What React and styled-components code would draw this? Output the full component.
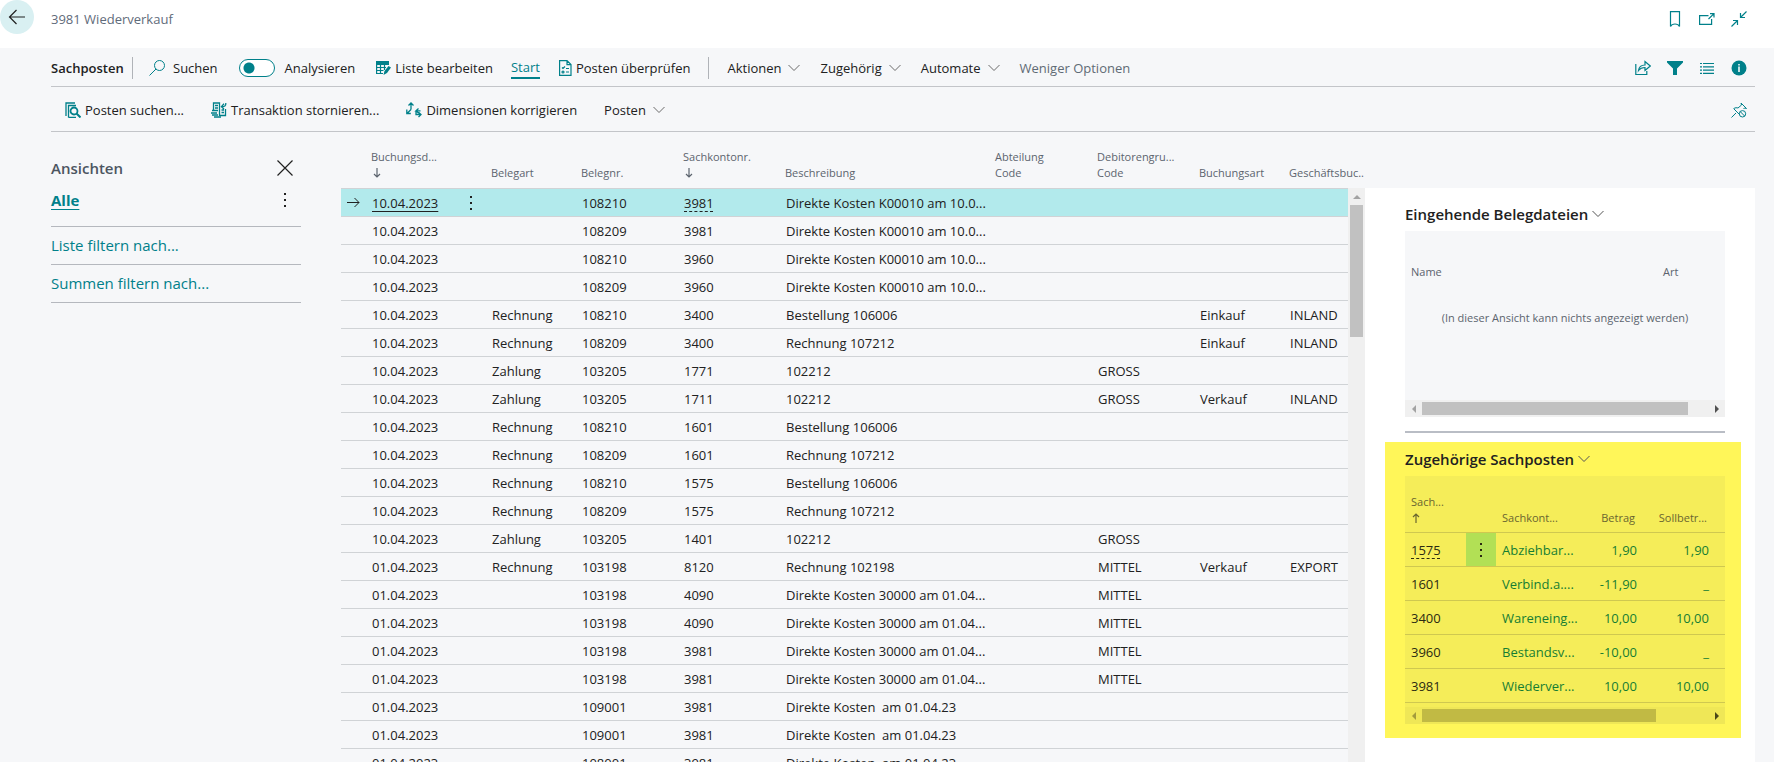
import React from "react";
import styled, { createGlobalStyle, css } from "styled-components";

const teal = "#00808a";

const GlobalStyle = createGlobalStyle`
  * { box-sizing: border-box; }
  body {
    margin: 0;
    background: #fff;
    color: #212121;
    font: 13px/20px "Open Sans", "Noto Sans", sans-serif;
  }
  button {
    font: inherit;
    color: inherit;
    background: none;
    border: 0;
    padding: 0;
    cursor: pointer;
  }
  table { border-collapse: separate; border-spacing: 0; table-layout: fixed; width: 100%; }
  h1, h2, h3 { margin: 0; font: inherit; }
  svg { display: block; flex: none; }
`;

const Page = styled.div`
  display: flex;
  flex-direction: column;
  height: 100vh;
  overflow: hidden;
`;

const TitleBar = styled.header`
  display: flex;
  align-items: flex-start;
  height: 48px;
  flex: none;
  padding-right: 27px;
`;

const BackButton = styled.button`
  display: grid;
  place-items: center;
  width: 34px;
  height: 34px;
  border-radius: 50%;
  background: #d9f0f2;
`;

const PageTitle = styled.h1`
  flex: 1;
  padding: 9px 0 0 17px;
  color: #5f6b7a;
`;

const IconGroup = styled.div`
  display: flex;
  align-items: center;
  gap: 16px;
  margin-left: auto;
  padding-top: ${(p) => p.$top || 0}px;
`;

const IconButton = styled.button`
  display: grid;
  place-items: center;
  width: 16px;
  height: 18px;
  color: ${teal};
`;

const Body = styled.div`
  flex: 1;
  min-height: 0;
  display: flex;
  flex-direction: column;
  background: #f6f7f9;
  padding: 0 19px 0 51px;
`;

const Bar = styled.nav`
  display: flex;
  align-items: center;
  flex: none;
  height: ${(p) => p.$height}px;
  padding: 2px 8px 0 ${(p) => p.$indent || 0}px;
  border-bottom: 1px solid #c3c5c9;
`;

const BarTitle = styled.h2`
  font-weight: 600;
  width: 81px;
  white-space: nowrap;
`;

const Divider = styled.span`
  width: 1px;
  height: 22px;
  margin-left: ${(p) => p.$before || 0}px;
  background: #b0b3b8;
`;

const Action = styled.button`
  display: flex;
  align-items: center;
  gap: ${(p) => p.$gap || 4}px;
  margin-left: ${(p) => p.$before}px;
  white-space: nowrap;
  color: ${(p) => (p.$muted ? "#5f6b75" : "inherit")};
  svg { color: ${(p) => (p.$menu ? "#6a6a6a" : teal)}; }
  ${(p) =>
    p.$active &&
    css`
      color: ${teal};
      border-bottom: 2px solid ${teal};
    `}
`;

const SwitchLabel = styled.label`
  display: flex;
  align-items: center;
  gap: 10px;
  margin-left: 21px;
`;

const Switch = styled.input`
  appearance: none;
  margin: 0;
  width: 36px;
  height: 18px;
  border: 1px solid ${teal};
  border-radius: 9px;
  background: radial-gradient(circle at 9px 8px, ${teal} 5px, #fff 6px);
`;

const Content = styled.div`
  flex: 1;
  min-height: 0;
  display: flex;
`;

const Views = styled.aside`
  width: 250px;
  flex: none;
  margin-right: 40px;
  padding-top: 20px;
  font-size: 15px;
  line-height: 28px;
`;

const ViewRow = styled.div`
  display: flex;
  justify-content: space-between;
  align-items: center;
  height: 32px;
  padding-right: ${(p) => p.$right}px;
  margin-bottom: ${(p) => p.$after || 0}px;
`;

const ViewsTitle = styled.h3`
  font-weight: 600;
  color: #4c5561;
`;

const ViewLink = styled.a`
  font-weight: 700;
  color: ${teal};
  text-underline-offset: 3px;
`;

const FilterButton = styled.button`
  display: block;
  width: 100%;
  height: 38px;
  padding-bottom: 2px;
  text-align: left;
  color: ${teal};
  border-top: 1px solid #b5b8be;
  &:last-child { height: 39px; border-bottom: 1px solid #b5b8be; }
`;

const ListPane = styled.main`
  flex: 1;
  min-width: 0;
  overflow: hidden;
  display: grid;
  grid-template-columns: minmax(0, 1fr) 17px;
`;

const ListHead = styled.th`
  height: 57px;
  padding: 0 0 7px 5px;
  border-bottom: 1px solid #d0d3d6;
  vertical-align: bottom;
  text-align: left;
  white-space: nowrap;
  font-size: 11px;
  line-height: 16px;
  font-weight: 400;
  color: #5c646e;
  svg { margin: 1px 0 1px 1px; }
`;

const ListCell = styled.td`
  height: 28px;
  padding: 0 0 0 ${(p) => (p.$menu ? 0 : 6)}px;
  border-bottom: 1px solid #d0d3d6;
  white-space: pre;
  line-height: 20px;
  background: ${(p) => (p.$selected ? "#b2eaec" : "transparent")};
`;

const CellLink = styled.a`
  color: inherit;
  text-decoration: underline ${(p) => (p.$dashed ? "dashed" : "solid")} 1px;
  text-underline-offset: 3px;
`;

const VTrack = styled.div`
  display: flex;
  flex-direction: column;
  align-items: center;
  margin-top: 56px;
  background: #f0f0f0;
`;

const VArrow = styled.button`
  display: grid;
  place-items: center;
  height: 17px;
  color: #a3a3a3;
`;

const VThumb = styled.div`
  width: 13px;
  height: 132px;
  background: #c1c1c1;
`;

const FactPane = styled.aside`
  width: 390px;
  flex: none;
  margin-top: 56px;
  background: #fff;
`;

const FactBox = styled.section`
  margin: 0 14px 0 20px;
  padding: ${(p) => (p.$marked ? "1px 16px 14px 20px" : "10px 16px 0 20px")};
  background: ${(p) => (p.$marked ? "#fff659" : "transparent")};
`;

const FactTitle = styled.button`
  display: flex;
  align-items: center;
  gap: 4px;
  height: 32px;
  margin-bottom: 1px;
  font-size: 15px;
  font-weight: 600;
  white-space: nowrap;
  svg { color: #555; }
`;

const FactGrid = styled.div`
  display: flex;
  flex-direction: column;
  height: ${(p) => p.$height}px;
  background: ${(p) => (p.$marked ? "#f5ed59" : "#f6f7f9")};
`;

const FactHead = styled.th`
  height: ${(p) => p.$height}px;
  padding: 0 ${(p) => p.$right || 0}px 6px 6px;
  vertical-align: bottom;
  text-align: ${(p) => (p.$right ? "right" : "left")};
  font-size: 11px;
  line-height: 16px;
  font-weight: 400;
  white-space: nowrap;
  color: ${(p) => (p.$marked ? "#6a6630" : "#5c646e")};
  border-bottom: ${(p) => (p.$marked ? "1px solid #cfc850" : "0")};
  svg { margin: 1px 0 1px 0; }
`;

const EmptyCell = styled.td`
  padding: 22px 0 0;
  text-align: center;
  font-size: 11px;
  color: #5c646e;
  white-space: nowrap;
`;

const FactCell = styled.td`
  height: 34px;
  padding: 0 ${(p) => p.$right || 0}px 0 ${(p) => (p.$menu ? 0 : 6)}px;
  text-align: ${(p) => (p.$right ? "right" : "left")};
  white-space: nowrap;
  color: ${(p) => (p.$key ? "#2b2a12" : "#157d33")};
  background: ${(p) => (p.$menu ? "#b2e055" : "transparent")};
  border-bottom: 1px solid #cfc850;
`;

const MenuButton = styled.button`
  display: grid;
  place-items: center;
  width: 30px;
  height: 24px;
`;

const HTrack = styled.div`
  display: flex;
  align-items: center;
  height: 17px;
  margin-top: auto;
  background: ${(p) => (p.$marked ? "#efe757" : "#f0f0f0")};
`;

const HArrow = styled.button`
  display: grid;
  place-items: center;
  width: 17px;
  height: 17px;
  margin-left: ${(p) => (p.$end ? "auto" : 0)};
  color: ${(p) => p.$color};
`;

const HThumb = styled.div`
  width: ${(p) => p.$width}%;
  height: 13px;
  background: ${(p) => (p.$marked ? "#c1ba44" : "#c1c1c1")};
`;

const Separator = styled.hr`
  margin: 14px 30px 9px 40px;
  border: 0;
  height: 2px;
  background: #b9bdc5;
`;

const Svg = ({ w = 16, h = 16, sw = 1, children }) => (
  <svg width={w} height={h} viewBox={`0 0 ${w} ${h}`} fill="none" stroke="currentColor" strokeWidth={sw} aria-hidden="true">
    {children}
  </svg>
);

const Chevron = () => <Svg w={12} h={8}><path d="M.5 1l5.5 5.5L11.500 1" /></Svg>;
const Dots = () => (
  <Svg w={2} h={14}><path d="M0 1h2M0 7h2M0 13h2" strokeWidth="2" /></Svg>
);
const BackIcon = () => <Svg w={18} h={16} sw={1.2}><path d="M17 8H1.500M8.500 1L1.500 8l7 7" /></Svg>;
const RowArrow = () => <Svg w={13} h={11}><path d="M0 5.500h12M7.500 1l4.500 4.500L7.500 10" /></Svg>;
const SortArrow = ({ up }) => (
  <Svg w={10} h={14} sw={1.2}><path d={up ? "M5 12V3M2 6l3-3 3 3" : "M5 2v9M2 8l3 3 3-3"} /></Svg>
);
const SearchIcon = () => <Svg><circle cx="10.500" cy="5.500" r="5" /><path d="M7 9L.5 15.500" /></Svg>;
const CloseIcon = () => <Svg sw={1.2}><path d="M.5.5l15 15M15.500.5l-15 15" /></Svg>;
const EditListIcon = () => (
  <Svg w={15} h={14} sw={1.2}>
    <path d="M0 0h13v4H0z" fill="currentColor" stroke="none" />
    <path d="M.6 3v9.500H7M.5 6.500h9.500M.5 9.500h7M4.500 4v8.500M8.500 4v5" />
    <path d="M7.500 14l1-4 4-5 2.500 1.500-4 5.500z" fill="currentColor" stroke="none" />
  </Svg>
);
const CheckDocIcon = () => (
  <Svg w={13} h={16} sw={1.2}>
    <path d="M.6.6h7.400l4 4v10.800H.6zM8 .6v4h4M3 7.500l1 1L6 6.500M7 8.500h3M7 12h3" />
    <circle cx="4" cy="12" r="1" />
  </Svg>
);
const FindEntriesIcon = () => (
  <Svg sw={1.3}>
    <path d="M1 14V1h9M3.500 15.500v-12H11M3.500 15.500H11" />
    <circle cx="9" cy="9" r="3.500" strokeWidth="1.8" />
    <path d="M11.500 11.500l4 4" strokeWidth="2" />
  </Svg>
);
const ReverseIcon = () => (
  <Svg sw={1.3}>
    <path d="M2.500 8V1H8.500V14M4 3.500h3M4 6h3M1 8.500h6M0 11h6M1 13h6M3 15h7" />
    <path d="M8.500 13.500h6V7M10.500 8H13M10.500 10.500H13M14.800 1c.3 3-1.300 3.600-4 3.600M13 1.800l-2.600 2.800L13 7" />
  </Svg>
);
const DimensionIcon = () => (
  <Svg sw={1.3}>
    <path d="M5 7.500V1M2.500 3.500L5 1l2.500 2.500M5 7.500L1 11.500M.8 7.500v4h4" />
    <path d="M12.500 6.500L10 8.800h4.500M10 8.800L12.500 11M10 9v3.500h5M12.500 10.300L15 12.600 12.500 15" />
  </Svg>
);
const BookmarkIcon = () => <Svg sw={1.2}><path d="M3.500.6h9v14.800C11.500 13.500 10 13 8 13s-3.500.5-4.500 2.400z" /></Svg>;
const PopOutIcon = () => <Svg sw={1.2}><path d="M9.500 4.600H.6v8.800h12V8M9.500 8L15 2.600M11 2.600h4V6.500" /></Svg>;
const CollapseIcon = () => (
  <Svg sw={1.2}><path d="M15.500.5l-6 6M9.500 2v4.500H14M.5 15.500l6-6M2 9.500h4.500V14" /></Svg>
);
const ShareIcon = () => (
  <Svg sw={1.2}><path d="M.8 4v10.500h11V11M3.500 10.500C4 6.500 6.500 5 10 5V1.500L15.300 6 10 10.500V7.500c-3 0-5 1-6.500 3z" /></Svg>
);
const FilterIcon = () => (
  <Svg><path d="M0 1h16v1.500l-6 6V15H6V8.500l-6-6z" fill="currentColor" stroke="none" /></Svg>
);
const ListIcon = () => (
  <Svg sw={1.2}><path d="M1 3.500h2M4 3.500h11M1 6.800h2M4 6.800h11M1 10.100h2M4 10.100h11M1 13.400h2M4 13.400h11" /></Svg>
);
const InfoIcon = () => (
  <Svg><circle cx="8" cy="8" r="7.500" fill="currentColor" stroke="none" /><path d="M8 4v1.500M8 6.500V12" stroke="#fff" strokeWidth="1.500" /></Svg>
);
const UnpinIcon = () => (
  <Svg>
    <path d="M.5 15.500L5 11M2.500 6.500l6.500 6.500M3 6.500c1-1 3-.8 4-.5l3.500-3-.5-2 5.500 5.500-2-.5-1 1" />
    <circle cx="11.500" cy="11.800" r="3.200" /><path d="M9.300 9.700l4.300 4.300" />
  </Svg>
);
const Triangle = ({ d }) => <Svg w={8} h={8}><path d={d} fill="currentColor" stroke="none" /></Svg>;

const listColumns = [
  { width: 25 },
  { label: "Buchungsd...", sort: true, width: 90 },
  { width: 30 },
  { label: "Belegart", width: 90 },
  { label: "Belegnr.", width: 102 },
  { label: "Sachkontonr.", sort: true, width: 102 },
  { label: "Beschreibung", width: 210 },
  { label: "Abteilung", second: "Code", width: 102 },
  { label: "Debitorengru...", second: "Code", width: 102 },
  { label: "Buchungsart", width: 90 },
  { label: "Geschäftsbuc.." },
];

const A = "10.04.2023";
const B = "01.04.2023";
const K = "Direkte Kosten K00010 am 10.0...";
const D = "Direkte Kosten 30000 am 01.04...";
const E = "Direkte Kosten  am 01.04.23";
const entries = [
  [A, "", "108210", "3981", K, "", "", "", ""],
  [A, "", "108209", "3981", K, "", "", "", ""],
  [A, "", "108210", "3960", K, "", "", "", ""],
  [A, "", "108209", "3960", K, "", "", "", ""],
  [A, "Rechnung", "108210", "3400", "Bestellung 106006", "", "", "Einkauf", "INLAND"],
  [A, "Rechnung", "108209", "3400", "Rechnung 107212", "", "", "Einkauf", "INLAND"],
  [A, "Zahlung", "103205", "1771", "102212", "", "GROSS", "", ""],
  [A, "Zahlung", "103205", "1711", "102212", "", "GROSS", "Verkauf", "INLAND"],
  [A, "Rechnung", "108210", "1601", "Bestellung 106006", "", "", "", ""],
  [A, "Rechnung", "108209", "1601", "Rechnung 107212", "", "", "", ""],
  [A, "Rechnung", "108210", "1575", "Bestellung 106006", "", "", "", ""],
  [A, "Rechnung", "108209", "1575", "Rechnung 107212", "", "", "", ""],
  [A, "Zahlung", "103205", "1401", "102212", "", "GROSS", "", ""],
  [B, "Rechnung", "103198", "8120", "Rechnung 102198", "", "MITTEL", "Verkauf", "EXPORT"],
  [B, "", "103198", "4090", D, "", "MITTEL", "", ""],
  [B, "", "103198", "4090", D, "", "MITTEL", "", ""],
  [B, "", "103198", "3981", D, "", "MITTEL", "", ""],
  [B, "", "103198", "3981", D, "", "MITTEL", "", ""],
  [B, "", "109001", "3981", E, "", "", "", ""],
  [B, "", "109001", "3981", E, "", "", "", ""],
  [B, "", "108001", "3981", E, "", "", "", ""],
];

const related = [
  ["1575", "Abziehbar...", "1,90", "1,90"],
  ["1601", "Verbind.a....", "-11,90", "_"],
  ["3400", "Wareneing...", "10,00", "10,00"],
  ["3960", "Bestandsv...", "-10,00", "_"],
  ["3981", "Wiederver...", "10,00", "10,00"],
];

const MenuAction = ({ before, children }) => (
  <Action $before={before} $gap={7} $menu aria-haspopup="menu">
    {children}
    <Chevron />
  </Action>
);

const HScroll = ({ width, marked }) => (
  <HTrack $marked={marked}>
    <HArrow aria-label="Nach links" $color={marked ? "#a39c3c" : "#a3a3a3"}><Triangle d="M6 0v8L2 4z" /></HArrow>
    <HThumb $width={width} $marked={marked} />
    <HArrow aria-label="Nach rechts" $end $color={marked ? "#4a4718" : "#505050"}><Triangle d="M2 0v8l4-4z" /></HArrow>
  </HTrack>
);

function EntryList() {
  return (
    <ListPane>
      <table>
        <colgroup>{listColumns.map((c, i) => <col key={i} width={c.width} />)}</colgroup>
        <thead>
          <tr>
            {listColumns.map((c, i) => (
              <ListHead key={i}>
                {c.label}
                {c.second && <div>{c.second}</div>}
                {c.sort && <SortArrow />}
              </ListHead>
            ))}
          </tr>
        </thead>
        <tbody>
          {entries.map(([date, type, doc, account, ...rest], i) => {
            const selected = i === 0;
            return (
              <tr key={i}>
                <ListCell $selected={selected}>{selected && <RowArrow />}</ListCell>
                <ListCell $selected={selected}>{selected ? <CellLink href="#posten">{date}</CellLink> : date}</ListCell>
                <ListCell $selected={selected} $menu>
                  {selected && <MenuButton aria-label="Weitere Optionen"><Dots /></MenuButton>}
                </ListCell>
                <ListCell $selected={selected}>{type}</ListCell>
                <ListCell $selected={selected}>{doc}</ListCell>
                <ListCell $selected={selected}>{selected ? <CellLink $dashed href="#konto">{account}</CellLink> : account}</ListCell>
                {rest.map((v, j) => <ListCell key={j} $selected={selected}>{v}</ListCell>)}
              </tr>
            );
          })}
        </tbody>
      </table>
      <VTrack>
        <VArrow aria-label="Nach oben"><Triangle d="M0 6h8L4 2z" /></VArrow>
        <VThumb />
      </VTrack>
    </ListPane>
  );
}

function Facts() {
  return (
    <FactPane>
      <FactBox>
        <FactTitle>Eingehende Belegdateien <Chevron /></FactTitle>
        <FactGrid $height={186}>
          <table>
            <colgroup><col /><col width="68" /></colgroup>
            <thead>
              <tr><FactHead $height={55}>Name</FactHead><FactHead $height={55}>Art</FactHead></tr>
            </thead>
            <tbody><tr><EmptyCell colSpan={2}>(In dieser Ansicht kann nichts angezeigt werden)</EmptyCell></tr></tbody>
          </table>
          <HScroll width={83} />
        </FactGrid>
      </FactBox>
      <Separator />
      <FactBox $marked>
        <FactTitle>Zugehörige Sachposten <Chevron /></FactTitle>
        <FactGrid $height={248} $marked>
          <table>
            <colgroup><col width="61" /><col width="30" /><col /><col width="72" /><col width="72" /><col width="15" /></colgroup>
            <thead>
              <tr>
                <FactHead $marked $height={57}>Sach...<SortArrow up /></FactHead>
                <FactHead $marked />
                <FactHead $marked>Sachkont...</FactHead>
                <FactHead $marked $right={3}>Betrag</FactHead>
                <FactHead $marked $right={3}>Sollbetr...</FactHead>
                <FactHead $marked />
              </tr>
            </thead>
            <tbody>
              {related.map(([key, name, amount, debit], i) => (
                <tr key={key}>
                  <FactCell $key>{i === 0 ? <CellLink $dashed href="#konto">{key}</CellLink> : key}</FactCell>
                  {i === 0 ? (
                    <FactCell $menu $key><MenuButton aria-label="Weitere Optionen"><Dots /></MenuButton></FactCell>
                  ) : <FactCell />}
                  <FactCell>{name}</FactCell>
                  <FactCell $right={1}>{amount}</FactCell>
                  <FactCell $right={1}>{debit}</FactCell>
                  <FactCell />
                </tr>
              ))}
            </tbody>
          </table>
          <HScroll width={73} marked />
        </FactGrid>
      </FactBox>
    </FactPane>
  );
}

export default function App() {
  return (
    <Page>
      <GlobalStyle />
      <TitleBar>
        <BackButton aria-label="Zurück"><BackIcon /></BackButton>
        <PageTitle>3981 Wiederverkauf</PageTitle>
        <IconGroup $top={10}>
          <IconButton aria-label="Lesezeichen"><BookmarkIcon /></IconButton>
          <IconButton aria-label="In neuem Fenster öffnen"><PopOutIcon /></IconButton>
          <IconButton aria-label="Verkleinern"><CollapseIcon /></IconButton>
        </IconGroup>
      </TitleBar>
      <Body>
        <Bar $height={39}>
          <BarTitle>Sachposten</BarTitle>
          <Divider />
          <Action $before={16} $gap={8}><SearchIcon />Suchen</Action>
          <SwitchLabel><Switch type="checkbox" role="switch" />Analysieren</SwitchLabel>
          <Action $before={21}><EditListIcon />Liste bearbeiten</Action>
          <Action $before={18} $active>Start</Action>
          <Action $before={19}><CheckDocIcon />Posten überprüfen</Action>
          <Divider $before={18} />
          <MenuAction before={18}>Aktionen</MenuAction>
          <MenuAction before={20}>Zugehörig</MenuAction>
          <MenuAction before={20}>Automate</MenuAction>
          <Action $before={20} $muted>Weniger Optionen</Action>
          <IconGroup>
            <IconButton aria-label="Teilen"><ShareIcon /></IconButton>
            <IconButton aria-label="Filter"><FilterIcon /></IconButton>
            <IconButton aria-label="Listenansicht"><ListIcon /></IconButton>
            <IconButton aria-label="Info"><InfoIcon /></IconButton>
          </IconGroup>
        </Bar>
        <Bar $height={45} $indent={14}>
          <Action $before={0}><FindEntriesIcon />Posten suchen...</Action>
          <Action $before={27}><ReverseIcon />Transaktion stornieren...</Action>
          <Action $before={27}><DimensionIcon />Dimensionen korrigieren</Action>
          <MenuAction before={27}>Posten</MenuAction>
          <IconGroup>
            <IconButton aria-label="Lösen"><UnpinIcon /></IconButton>
          </IconGroup>
        </Bar>
        <Content>
          <Views>
            <ViewRow $right={8}>
              <ViewsTitle>Ansichten</ViewsTitle>
              <button aria-label="Schließen"><CloseIcon /></button>
            </ViewRow>
            <ViewRow $right={1} $after={10}>
              <ViewLink href="#alle">Alle</ViewLink>
              <MenuButton aria-label="Optionen der Ansicht"><Dots /></MenuButton>
            </ViewRow>
            <FilterButton>Liste filtern nach...</FilterButton>
            <FilterButton>Summen filtern nach...</FilterButton>
          </Views>
          <EntryList />
          <Facts />
        </Content>
      </Body>
    </Page>
  );
}
